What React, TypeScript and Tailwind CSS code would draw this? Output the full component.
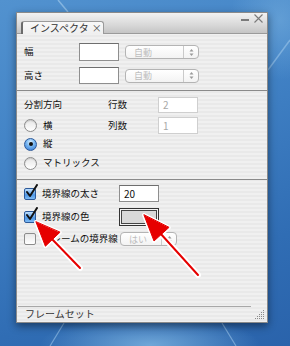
import React from "react";

const F = "font-[family-name:'Noto_Sans_CJK_JP','Noto_Sans',sans-serif]";

function Radio({ checked }: { checked?: boolean }) {
  if (checked)
    return (
      <div className="w-[13px] h-[13px] rounded-full border border-[#2d5a9a] bg-[radial-gradient(circle_at_50%_30%,#e4f3ff_0%,#7dbaf2_40%,#2f74d2_100%)] flex items-center justify-center shrink-0">
        <div className="w-[4px] h-[4px] rounded-full bg-[#111]" />
      </div>
    );
  return (
    <div className="w-[13px] h-[13px] rounded-full border border-[#8c8c8c] bg-[linear-gradient(#e6e6e6,#ffffff)] shadow-[inset_0_1px_1px_rgba(0,0,0,0.15)] shrink-0" />
  );
}

function Check({ checked }: { checked?: boolean }) {
  return (
    <div className="relative w-[12px] h-[12px] shrink-0">
      {checked ? (
        <div className="w-[12px] h-[12px] rounded-[2px] border border-[#2d5a9a] bg-[linear-gradient(#bfe0ff,#4f97e6_60%,#7fbcf5)]" />
      ) : (
        <div className="w-[12px] h-[12px] rounded-[2px] border border-[#8c8c8c] bg-[linear-gradient(#e8e8e8,#ffffff)]" />
      )}
      {checked && (
        <svg className="absolute left-[1px] top-[-4px]" width="13" height="14" viewBox="0 0 13 14">
          <path d="M2 8 L5 12 L12 1" fill="none" stroke="#111" strokeWidth="2" strokeLinecap="round" strokeLinejoin="round" />
        </svg>
      )}
    </div>
  );
}

function Select({ w, text }: { w: string; text: string }) {
  return (
    <div className={`${w} h-[14px] rounded-[4px] border border-[#b4b4b4] bg-[linear-gradient(#ffffff,#f3f3f3)] flex items-center`}>
      <span className="flex-1 pl-[8px] text-[9px] leading-none text-[#bdbdbd] whitespace-nowrap">{text}</span>
      <div className="w-[15px] h-full border-l border-[#cacaca] flex items-center justify-center">
        <svg width="5" height="9" viewBox="0 0 5 9">
          <path d="M0.5 3.5 L2.5 1 L4.5 3.5 Z" fill="#9a9a9a" />
          <path d="M0.5 5.5 L2.5 8 L4.5 5.5 Z" fill="#9a9a9a" />
        </svg>
      </div>
    </div>
  );
}

function Input({ h, children, disabled }: { h: string; children?: React.ReactNode; disabled?: boolean }) {
  return (
    <div
      className={`w-[40px] ${h} bg-white border ${
        disabled ? "border-[#cfcfcf] text-[#a8a8a8]" : "border-[#8e8e8e] border-t-[#6e6e6e] text-[#111]"
      } flex items-center pl-[4px] text-[10px] leading-none shrink-0`}
    >
      {children}
    </div>
  );
}

export default function App() {
  return (
    <div className={`relative w-[290px] h-[346px] overflow-hidden bg-[linear-gradient(160deg,#5292cf_0%,#4283c6_35%,#306db4_75%,#2a63ab_100%)] ${F}`}>
      <svg className="absolute inset-0" width="290" height="346" viewBox="0 0 290 346">
        <defs>
          <radialGradient id="glow" cx="0.5" cy="0.5" r="0.5">
            <stop offset="0" stopColor="#7fb6e2" stopOpacity="0.8" />
            <stop offset="1" stopColor="#7fb6e2" stopOpacity="0" />
          </radialGradient>
        </defs>
        <ellipse cx="150" cy="345" rx="110" ry="30" fill="url(#glow)" />
        <ellipse cx="280" cy="20" rx="50" ry="60" fill="url(#glow)" opacity="0.6" />
        <path d="M58 0 L68 12" stroke="#9cc6ea" strokeWidth="1.5" opacity="0.7" />
        <path d="M290 40 L268 70" stroke="#9cc6ea" strokeWidth="1.5" opacity="0.6" />
        <path d="M50 346 L64 323" stroke="#9cc6ea" strokeWidth="1.2" opacity="0.6" />
        <path d="M222 323 L236 346" stroke="#9cc6ea" strokeWidth="1.2" opacity="0.6" />
      </svg>

      <div className="pt-[12px] pl-[16px]">
        <div className="relative w-[252px] h-[311px] flex flex-col border border-[#8a8a8a] shadow-[0_3px_8px_rgba(0,0,0,0.45)] bg-[repeating-linear-gradient(to_bottom,#f0f0f0_0px,#f0f0f0_2px,#e9e9e9_2px,#e9e9e9_4px)] text-[9.5px] leading-none text-[#111] whitespace-nowrap">
          {/* title bar */}
          <div className="h-[21px] shrink-0 flex items-end justify-between bg-[linear-gradient(#f2f2f2,#d8d8d8_60%,#c4c4c4)] border-b border-[#9a9a9a] pl-[4px] pr-[4px]">
            <div className="-mb-px w-[83px] h-[13px] flex items-center pl-[7px] rounded-t-[3px] border-t border-r border-[#9a9a9a] border-l-2 border-l-[#6a6a6a] bg-[linear-gradient(#f8f8f8,#efefef)] text-[#333] text-[10px]">
              インスペクタ <span className="ml-[3px] text-[#555]">×</span>
            </div>
            <div className="self-start mt-[1px] flex items-center gap-[5px] text-[#7a7a7a]">
              <div className="w-[8px] h-[2px] bg-[#7a7a7a] mt-[2px]" />
              <svg width="9" height="9" viewBox="0 0 9 9">
                <path d="M0.5 0.5 L8.5 8.5 M8.5 0.5 L0.5 8.5" stroke="#7a7a7a" strokeWidth="1.1" />
              </svg>
            </div>
          </div>

          {/* section 1 */}
          <div className="pl-[7px] pt-[9px] pb-[6px] flex flex-col gap-[6px]">
            <div className="flex items-center h-[18px]">
              <span className="w-[55px]">幅</span>
              <Input h="h-[18px]" />
              <div className="ml-[6px]"><Select w="w-[74px]" text="自動" /></div>
            </div>
            <div className="flex items-center h-[17px]">
              <span className="w-[55px]">高さ</span>
              <Input h="h-[17px]" />
              <div className="ml-[6px]"><Select w="w-[74px]" text="自動" /></div>
            </div>
          </div>
          <div className="h-px bg-[#8a8a8a]" />

          {/* section 2 */}
          <div className="pl-[7px] pt-[6px] pb-[7px] flex flex-col">
            <div className="flex items-center h-[16px]">
              <span className="w-[84px]">分割方向</span>
              <span className="w-[50px]">行数</span>
              <Input h="h-[16px]" disabled>2</Input>
            </div>
            <div className="flex items-center h-[17px] mt-[4px]">
              <div className="w-[84px] flex items-center gap-[6px]"><Radio /><span>横</span></div>
              <span className="w-[50px]">列数</span>
              <Input h="h-[17px]" disabled>1</Input>
            </div>
            <div className="flex items-center h-[18px] mt-[1px]">
              <div className="flex items-center gap-[6px]"><Radio checked /><span>縦</span></div>
            </div>
            <div className="flex items-center h-[18px] mt-[1px]">
              <div className="flex items-center gap-[6px]"><Radio /><span>マトリックス</span></div>
            </div>
          </div>
          <div className="h-px bg-[#8a8a8a]" />

          {/* section 3 */}
          <div className="pl-[7px] pt-[5px] flex flex-col">
            <div className="flex items-center h-[17px]">
              <div className="w-[95px] flex items-center gap-[6px]"><Check checked /><span>境界線の太さ</span></div>
              <Input h="h-[17px]">20</Input>
            </div>
            <div className="flex items-center h-[18px] mt-[6px]">
              <div className="w-[95px] flex items-center gap-[6px]"><Check checked /><span>境界線の色</span></div>
              <div className="w-[40px] h-[18px] border border-[#333] p-px bg-[#f4f4f4]">
                <div className="w-full h-full border border-[#444] bg-[#d9d9d9]" />
              </div>
            </div>
            <div className="flex items-center h-[18px] mt-[4px]">
              <div className="w-[96px] flex items-center gap-[6px]"><Check /><span>フレームの境界線</span></div>
              <Select w="w-[57px]" text="はい" />
            </div>
          </div>

          <div className="flex-1" />

          {/* footer */}
          <div className="h-px bg-[#a8a8a8] ml-[1px] mr-[16px]" />
          <div className="h-[15px] flex items-center pl-[8px] pb-[2px] text-[#333] text-[10px]">フレームセット</div>
          <svg className="absolute right-[2px] bottom-[2px]" width="10" height="10" viewBox="0 0 10 10">
            {[
              [8, 0], [6, 2], [8, 2], [4, 4], [6, 4], [8, 4], [2, 6], [4, 6], [6, 6], [8, 6], [0, 8], [2, 8], [4, 8], [6, 8], [8, 8],
            ].map(([x, y], i) => (
              <rect key={i} x={x} y={y} width="1" height="1" fill="#8a8a8a" />
            ))}
          </svg>
        </div>
      </div>

      {/* red arrows overlay */}
      <svg className="absolute inset-0 pointer-events-none" width="290" height="346" viewBox="0 0 290 346">
        <g stroke="#fff" strokeLinejoin="round" strokeLinecap="round">
          <line x1="80" y1="268" x2="50" y2="237" strokeWidth="6" />
          <polygon points="36,222 45.4,246.2 59.8,232.4" fill="#fff" strokeWidth="4" />
          <line x1="198" y1="275" x2="160" y2="233" strokeWidth="6" />
          <polygon points="144,215 154,241 168.8,227.6" fill="#fff" strokeWidth="4" />
        </g>
        <g stroke="#e60000" strokeLinejoin="round" strokeLinecap="round">
          <line x1="80" y1="268" x2="50" y2="237" strokeWidth="2" />
          <polygon points="36,222 45.4,246.2 59.8,232.4" fill="#e60000" strokeWidth="1" />
          <line x1="198" y1="275" x2="160" y2="233" strokeWidth="2" />
          <polygon points="144,215 154,241 168.8,227.6" fill="#e60000" strokeWidth="1" />
        </g>
      </svg>
    </div>
  );
}
